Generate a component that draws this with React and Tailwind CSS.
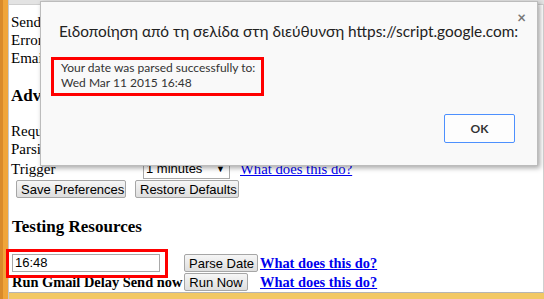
import React from "react";

const serif = { fontFamily: '"Liberation Serif", "Times New Roman", serif' };

const Btn = ({ children, className = "" }) => (
  <button
    className={`h-[18px] px-[4px] whitespace-nowrap border border-[#a6a6a6] rounded-[2px] bg-linear-to-b from-[#f6f6f6] to-[#dedede] text-[13px] leading-none text-black font-['Liberation_Sans',Arial,sans-serif] ${className}`}
  >
    {children}
  </button>
);

const Link = ({ bold }) => (
  <a
    className={`text-[#0000ee] underline whitespace-nowrap leading-[18px] ${
      bold ? "font-bold text-[14.4px]" : "text-[14.7px]"
    }`}
  >
    What does this do?
  </a>
);

const App = () => {
  return (
    <div className="relative w-[544px] h-[299px] overflow-hidden flex bg-[#f2c864]" style={serif}>
      {/* left window edge */}
      <div className="w-[9px] h-full flex">
        <div className="w-[3px] bg-[#d98a2a]" />
        <div className="w-[5px] bg-[#f0a53a]" />
        <div className="w-[1px] bg-[#c9c9c9]" />
      </div>

      <div className="flex-1 flex flex-col">
        <div className="h-[5px] bg-[#e3e3e3] border-b border-[#cfcfcf]" />
        <div className="flex-1 bg-white pl-[2px] pt-[8px] text-[15px] leading-[18px] text-black border-b border-[#b5b5b5] border-r border-r-[#d0d0d0]">
          <div>Send Delay</div>
          <div>Error Notifications</div>
          <div>Email Address</div>
          <h2 className="font-bold text-[17px] leading-[22px] mt-[18px]">Advanced Options</h2>
          <div className="mt-[15px]">Require Label</div>
          <div>Parsing Rules</div>
          <div className="flex items-center h-[20px] mt-[1px]">
            <span className="w-[132px]">Trigger</span>
            <div className="w-[87px] h-[20px] border border-[#a9a9a9] flex items-center justify-between pl-[2px] pr-[4px] text-[13px] font-['Liberation_Sans',Arial,sans-serif]">
              <span>1 minutes</span>
              <span className="text-[9px]">▼</span>
            </div>
            <span className="ml-[10px]">
              <Link />
            </span>
          </div>
          <div className="flex gap-[9px] pl-[5px] mt-[1px]">
            <Btn className="w-[110px]">Save Preferences</Btn>
            <Btn className="w-[104px]">Restore Defaults</Btn>
          </div>
          <h2 className="font-bold text-[17px] leading-[22px] mt-[18px] pl-[1px]">Testing Resources</h2>
          <div className="grid grid-cols-[172px_76px_auto] mt-[16px] items-center pl-[1px]">
            <input
              readOnly
              value="16:48"
              className="w-[148px] h-[18px] border border-[#a9a9a9] px-[2px] text-[13px] text-black font-['Liberation_Sans',Arial,sans-serif] outline-none"
            />
            <Btn className="w-[74px]">Parse Date</Btn>
            <span>
              <Link bold />
            </span>
            <span className="font-bold whitespace-nowrap text-[14.4px]">Run Gmail Delay Send now</span>
            <Btn className="w-[64px] mt-[1px]">Run Now</Btn>
            <span>
              <Link bold />
            </span>
          </div>
        </div>
        <div className="h-[6px]" />
      </div>

      {/* annotation around input */}
      <div className="absolute left-[6px] top-[249px] w-[162px] h-[29px] border-[3px] border-[#ff0000]" />

      {/* alert dialog */}
      <div className="absolute left-[40px] top-[1px] w-[498px] h-[165px] bg-[#f9f9f9] border border-[#bcbcbc] shadow-[2px_2px_5px_rgba(0,0,0,0.35)] font-['Lato','Open_Sans',sans-serif]">
        <div className="absolute right-[11px] top-[8px] text-[#777] text-[15px] font-bold leading-none">×</div>
        <div className="pl-[18px] pt-[18px] text-[15.4px] leading-[22px] text-[#222] whitespace-nowrap">
          Ειδοποίηση από τη σελίδα στη διεύθυνση https://script.google.com:
        </div>
        <div className="ml-[10px] mt-[15px] w-[213px] h-[39px] border-[3px] border-[#ff0000] pl-[7px] pt-0 text-[12px] leading-[15px] text-[#333] whitespace-nowrap">
          <div>Your date was parsed successfully to:</div>
          <div>Wed Mar 11 2015 16:48</div>
        </div>
        <div className="flex justify-end pr-[22px] mt-[18px]">
          <button className="w-[71px] h-[29px] border border-[#4d90fe] rounded-[2px] bg-[#fdfdfd] text-[12px] font-bold text-[#333]">
            OK
          </button>
        </div>
      </div>
    </div>
  );
};

export default App;
